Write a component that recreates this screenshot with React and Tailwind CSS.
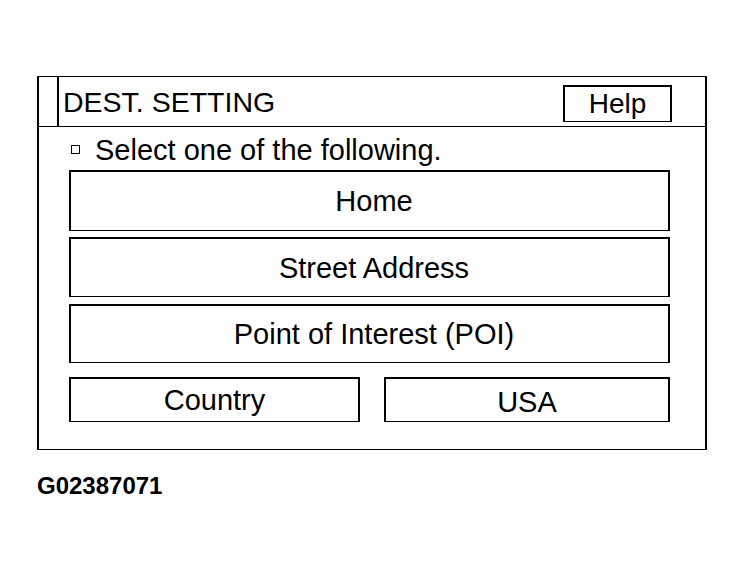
import React from 'react';

const Option = ({ label, className = '' }) => (
  <div
    className={`flex items-center justify-center border-x-2 border-t-2 border-b border-black text-[29px] leading-[28px] ${className}`}
  >
    {label}
  </div>
);

const App = () => {
  return (
    <div
      className="min-h-[571px] w-[745px] bg-white pt-[76px] pl-[37px] text-black"
      style={{ fontFamily: '"Liberation Sans", Arial, sans-serif' }}
    >
      {/* Screen frame */}
      <div className="flex h-[374px] w-[670px] flex-col border-x-2 border-y border-black">
        {/* Title bar */}
        <div className="flex h-[50px] border-b border-black">
          <div className="w-[20px] border-r-2 border-black" />
          <div className="flex items-center pl-[4px] text-[28.5px] leading-[28px]">DEST. SETTING</div>
          <div className="mt-[8px] mr-[33px] ml-auto flex h-[37px] w-[109px] items-center justify-center border-x-2 border-t-2 border-b border-black text-[28px] leading-[28px]">
            Help
          </div>
        </div>

        {/* Body */}
        <div className="flex flex-col pl-[30px] pr-[35px]">
          <div className="flex h-[43px] items-center pt-[2px] text-[29px] leading-[28px]">
            <span className="ml-[2px] mr-[15px] h-[9px] w-[9px] border border-black" />
            Select one of the following.
          </div>

          <Option label="Home" className="h-[61px] pl-[9px]" />
          <Option label="Street Address" className="mt-[6px] h-[60px] pl-[9px]" />
          <Option label="Point of Interest (POI)" className="mt-[7px] h-[59px] pl-[9px]" />

          <div className="mt-[14px] flex gap-[24px]">
            <Option label="Country" className="h-[45px] w-[291px]" />
            <Option label="USA" className="h-[45px] flex-1 pt-[4px]" />
          </div>
        </div>
      </div>

      <div className="mt-[24px] text-[24px] font-bold leading-[24px]">G02387071</div>
    </div>
  );
};

export default App;
